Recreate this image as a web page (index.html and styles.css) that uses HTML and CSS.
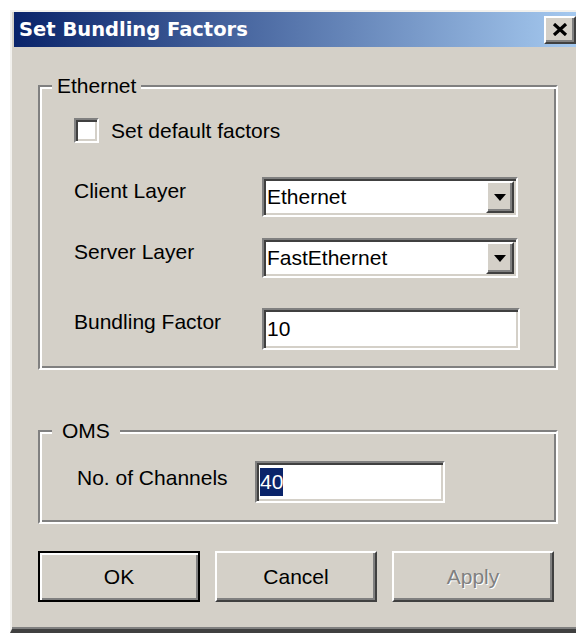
FILE: index.html
```html
<!DOCTYPE html>
<html lang="en">
<head>
<meta charset="utf-8">
<title>Set Bundling Factors</title>
<link rel="stylesheet" href="styles.css">
</head>
<body>
<div class="window">
  <div class="titlebar">
    <span class="titlebar__text">Set Bundling Factors</span>
    <button class="titlebar__close" type="button" aria-label="Close">
      <svg width="16" height="13" viewBox="0 0 16 13" aria-hidden="true">
        <path d="M2 1 L14 12 M14 1 L2 12" stroke="#000" stroke-width="3.2" fill="none"/>
      </svg>
    </button>
  </div>

  <div class="client">
    <section class="group group--ethernet">
      <span class="group__caption">Ethernet</span>

      <div class="check-row">
        <span class="checkbox"></span>
        <span class="check-row__text">Set default factors</span>
      </div>

      <div class="field-row field-row--first">
        <span class="field-label">Client Layer</span>
        <div class="combo">
          <span class="combo__value">Ethernet</span>
          <span class="combo__btn">
            <svg width="12" height="7" viewBox="0 0 12 7" aria-hidden="true"><path d="M0 0 H12 L6 7 Z" fill="#000"/></svg>
          </span>
        </div>
      </div>

      <div class="field-row">
        <span class="field-label">Server Layer</span>
        <div class="combo">
          <span class="combo__value">FastEthernet</span>
          <span class="combo__btn">
            <svg width="12" height="7" viewBox="0 0 12 7" aria-hidden="true"><path d="M0 0 H12 L6 7 Z" fill="#000"/></svg>
          </span>
        </div>
      </div>

      <div class="field-row field-row--spaced">
        <span class="field-label">Bundling Factor</span>
        <div class="edit edit--wide"><span class="edit__value">10</span></div>
      </div>
    </section>

    <section class="group group--oms">
      <span class="group__caption group__caption--wide">OMS</span>
      <div class="field-row field-row--only">
        <span class="field-label field-label--oms">No. of Channels</span>
        <div class="edit edit--narrow"><span class="edit__value edit__value--selected">40</span></div>
      </div>
    </section>

    <div class="actions">
      <button class="btn btn--default" type="button">OK</button>
      <button class="btn" type="button">Cancel</button>
      <button class="btn btn--disabled" type="button" disabled>Apply</button>
    </div>
  </div>
</div>
</body>
</html>
```

FILE: styles.css
```css
* {
  box-sizing: border-box;
}

html,
body {
  margin: 0;
  height: 100%;
  overflow: hidden;
  background: #fff;
}

body {
  font: 21px/24px "Liberation Sans", Arial, sans-serif;
  color: #000;
}

/* dialog frame */
.window {
  margin: 10px 0 0 10px;
  width: 570px;
  padding: 0 0 2px 2px;
  background: #d4d0c8;
  border-top: 2px solid #f2f1ee;
  border-left: 2px solid #f2f1ee;
  border-bottom: 4px solid #404040;
  box-shadow: inset 0 -2px 0 #808080;
}

/* caption bar */
.titlebar {
  height: 35px;
  display: flex;
  align-items: center;
  justify-content: space-between;
  padding: 0 4px 0 5px;
  background: linear-gradient(to right, #0a246a, #a6caf0);
  color: #fff;
  font: bold 19.5px/24px "DejaVu Sans", sans-serif;
}

.titlebar__close {
  width: 32px;
  height: 28px;
  padding: 0;
  display: flex;
  align-items: center;
  justify-content: center;
  background: #d4d0c8;
  border: 2px solid;
  border-color: #fff #404040 #404040 #fff;
  box-shadow: inset -2px -2px 0 #808080;
}

/* client area */
.client {
  height: 580px;
  padding: 38px 0 0 24px;
}

/* etched group boxes */
.group {
  position: relative;
  width: 520px;
  border: 2px solid;
  border-color: #808080 #fff #fff #808080;
  box-shadow: inset 2px 2px 0 #fff, inset -2px -2px 0 #808080;
}

.group--ethernet {
  height: 285px;
  padding: 31px 0 0 34px;
}

.group--oms {
  margin-top: 60px;
  height: 94px;
  padding: 29px 0 0 37px;
}

.group__caption {
  position: absolute;
  top: -13px;
  left: 12px;
  padding: 0 5px;
  background: #d4d0c8;
  line-height: 24px;
}

.group__caption--wide {
  padding: 0 10px;
}

/* checkbox row */
.check-row {
  display: flex;
  align-items: center;
  height: 25px;
}

.checkbox {
  width: 25px;
  height: 25px;
  background: #fff;
  border: 2px solid;
  border-color: #808080 #fff #fff #808080;
  box-shadow: inset 2px 2px 0 #404040, inset -2px -2px 0 #d4d0c8;
}

.check-row__text {
  margin-left: 12px;
}

/* label + field rows */
.field-row {
  display: flex;
  align-items: flex-start;
  margin-top: 21px;
}

.field-row--first {
  margin-top: 34px;
}

.field-row--spaced {
  margin-top: 30px;
}

.field-row--only {
  margin-top: 0;
}

.field-label {
  width: 188px;
  margin-top: 2px;
  white-space: nowrap;
}

.field-label--oms {
  width: 178px;
  margin-top: 5px;
}

/* sunken field edge shared by combo and edit */
.combo,
.edit {
  display: flex;
  align-items: center;
  padding: 2px;
  background: #fff;
  border: 2px solid;
  border-color: #808080 #fff #fff #808080;
  box-shadow: inset 2px 2px 0 #404040, inset -2px -2px 0 #d4d0c8;
}

.combo {
  width: 256px;
  height: 40px;
}

.combo__value {
  flex: 1;
  padding-left: 1px;
  line-height: 32px;
}

.combo__btn {
  width: 28px;
  height: 32px;
  display: flex;
  align-items: center;
  justify-content: center;
  background: #d4d0c8;
  border: 2px solid;
  border-color: #fff #404040 #404040 #fff;
  box-shadow: inset -2px -2px 0 #808080;
}

.edit {
  height: 42px;
}

.edit--wide {
  width: 258px;
}

.edit--narrow {
  width: 190px;
}

.edit__value {
  padding-left: 1px;
  line-height: 28px;
}

.edit__value--selected {
  margin-left: 1px;
  padding-left: 0;
  background: #0a246a;
  color: #fff;
}

/* push buttons */
.actions {
  display: flex;
  gap: 15px;
  margin-top: 27px;
}

.btn {
  width: 162px;
  height: 51px;
  padding: 0;
  font: 21px/24px "Liberation Sans", Arial, sans-serif;
  color: #000;
  background: #d4d0c8;
  border: 2px solid;
  border-color: #fff #404040 #404040 #fff;
  box-shadow: inset -2px -2px 0 #808080;
}

.btn--default {
  border-color: #000;
  box-shadow: inset 2px 2px 0 #fff, inset -2px -2px 0 #808080;
}

.btn--disabled {
  color: #808080;
  text-shadow: 1px 1px 0 #fff;
}
```
